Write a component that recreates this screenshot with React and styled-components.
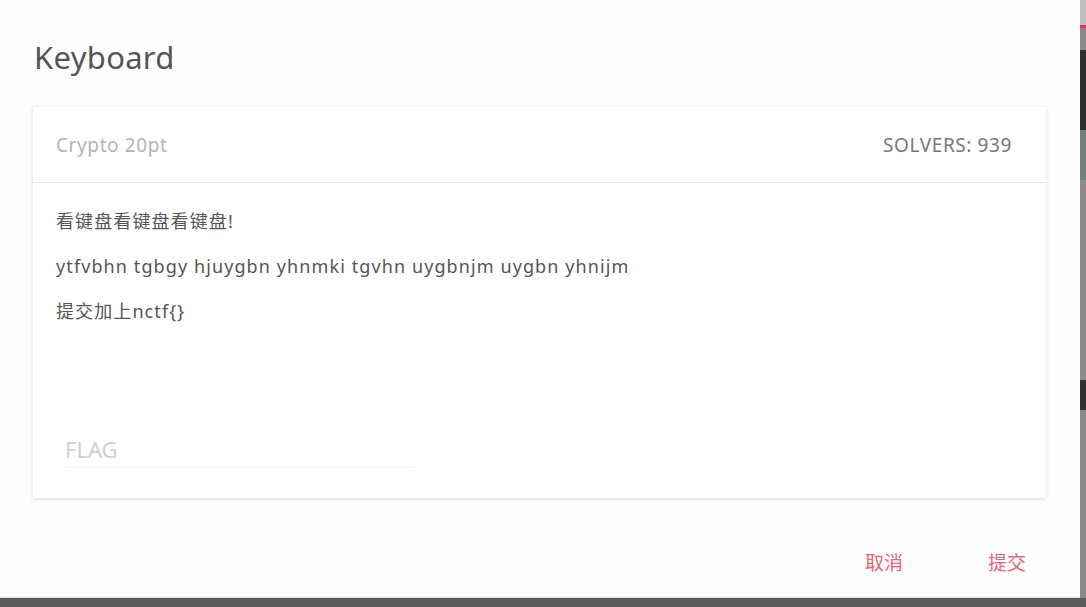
import React from 'react'
import styled, { createGlobalStyle } from 'styled-components'

const GlobalStyle = createGlobalStyle`
  html, body {
    margin: 0;
    padding: 0;
    background: #5b5b5b;
  }
  body {
    font-family: "Noto Sans", "Noto Sans CJK SC", sans-serif;
  }
`

const sideSegments = [
  { h: 25, color: '#bdbdbd' },
  { h: 3, color: '#d2405a' },
  { h: 22, color: '#8a8a8a' },
  { h: 80, color: '#2e2e2e' },
  { h: 50, color: '#6d807c' },
  { h: 200, color: '#8c8c8c' },
  { h: 30, color: '#2f2f2f' },
  { h: 188, color: '#8a8a8a' },
]

const App = () => {
  return (
    <Page>
      <GlobalStyle />
      <Top>
        <Dialog>
          <Title>Keyboard</Title>
          <Card>
            <CardHeader>
              <Category>Crypto 20pt</Category>
              <Solvers>SOLVERS: 939</Solvers>
            </CardHeader>
            <CardBody>
              <Line>看键盘看键盘看键盘!</Line>
              <Line>ytfvbhn tgbgy hjuygbn yhnmki tgvhn uygbnjm uygbn yhnijm</Line>
              <Line>提交加上nctf{'{}'}</Line>
              <FlagField>
                <FlagInput placeholder="FLAG" type="text" />
              </FlagField>
            </CardBody>
          </Card>
          <Actions>
            <ActionButton>取消</ActionButton>
            <ActionButton>提交</ActionButton>
          </Actions>
        </Dialog>
        <SideStrip>
          {sideSegments.map((s, i) => (
            <Segment key={i} h={s.h} color={s.color} />
          ))}
        </SideStrip>
      </Top>
    </Page>
  )
}

export default App

const Page = styled.div`
  width: 1086px;
  height: 607px;
  overflow: hidden;
  background: #5b5b5b;
`

const Top = styled.div`
  display: flex;
  height: 598px;
`

const Dialog = styled.div`
  width: 1080px;
  height: 598px;
  background: #fefefe;
  display: flex;
  flex-direction: column;
  box-sizing: border-box;
  border-bottom: 1px solid #d8d8d8;
`

const Title = styled.div`
  font-size: 31px;
  letter-spacing: 0.3px;
  color: #555;
  padding: 35px 0 0 34px;
  height: 73px;
  box-sizing: border-box;
  line-height: 44px;
`

const Card = styled.div`
  margin: 34px 0 0 33px;
  width: 1013px;
  height: 391px;
  background: #fff;
  box-shadow: 0 1px 4px rgba(0, 0, 0, 0.16);
  display: flex;
  flex-direction: column;
`

const CardHeader = styled.div`
  height: 75px;
  display: flex;
  align-items: center;
  justify-content: space-between;
  padding: 0 34px 0 23px;
  border-bottom: 1px solid #e4e4e4;
  font-size: 19px;
  letter-spacing: 0.6px;
`

const Category = styled.span`
  color: #b4b4b4;
`

const Solvers = styled.span`
  color: #777;
`

const CardBody = styled.div`
  padding: 27px 23px 0;
  display: flex;
  flex-direction: column;
  gap: 22px;
`

const Line = styled.div`
  font-size: 18px;
  letter-spacing: 1.1px;
  line-height: 23px;
  color: #555;
`

const FlagField = styled.div`
  margin-top: 89px;
  margin-left: 9px;
  width: 350px;
  border-bottom: 1px solid #f0f0f0;
`

const FlagInput = styled.input`
  border: none;
  outline: none;
  background: transparent;
  font-family: inherit;
  font-size: 22px;
  color: #555;
  padding: 0 0 3px;
  width: 100%;

  &::placeholder {
    color: #d0d0d0;
  }
`

const Actions = styled.div`
  display: flex;
  justify-content: flex-end;
  gap: 85px;
  padding: 50px 54px 0 0;
`

const ActionButton = styled.button`
  border: none;
  background: transparent;
  padding: 0;
  font-family: "Noto Sans CJK SC", sans-serif;
  font-size: 19px;
  color: #ea6279;
  cursor: pointer;
`

const SideStrip = styled.div`
  width: 6px;
  display: flex;
  flex-direction: column;
`

const Segment = styled.div`
  height: ${props => props.h}px;
  background: ${props => props.color};
  flex-shrink: 0;
`
